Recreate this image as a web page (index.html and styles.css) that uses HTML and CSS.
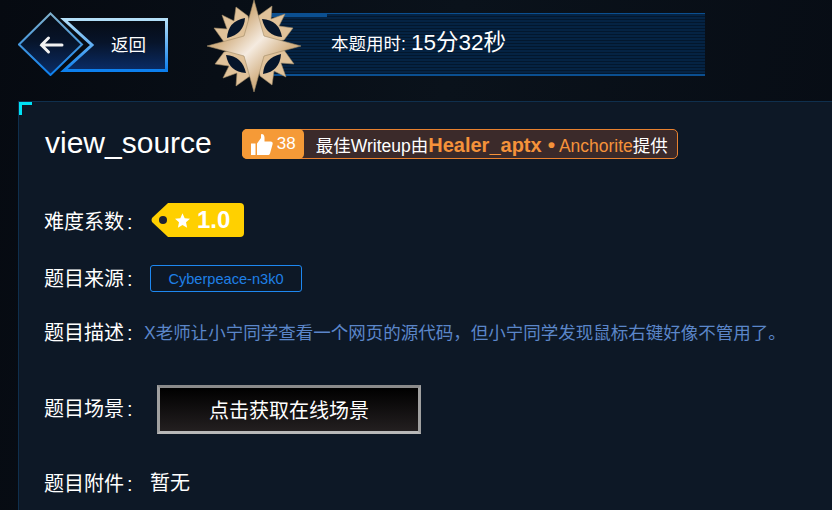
FILE: index.html
```html
<!DOCTYPE html>
<html lang="en">

<head>
    <meta charset="UTF-8">
    <meta name="viewport" content="width=device-width, initial-scale=1.0">
    <title>view_source</title>
    <link rel="stylesheet" href="styles.css">
</head>

<body>
    <header class="top-bar">
        <a class="back-btn">
            <svg class="back-shape" width="150" height="64" viewBox="0 0 150 64">
                <defs>
                    <linearGradient id="edge" x1="0" y1="0" x2="0" y2="1">
                        <stop offset="0" stop-color="#b4dff8" />
                        <stop offset="1" stop-color="#0c7fee" />
                    </linearGradient>
                    <linearGradient id="edge-dim" x1="0" y1="0" x2="0" y2="1">
                        <stop offset="0" stop-color="#7fb0cc" />
                        <stop offset="1" stop-color="#0c7fee" />
                    </linearGradient>
                    <linearGradient id="fill" x1="0" y1="0" x2="0" y2="1">
                        <stop offset="0" stop-color="#060b14" />
                        <stop offset="0.45" stop-color="#07142a" />
                        <stop offset="1" stop-color="#0a2c66" />
                    </linearGradient>
                </defs>
                <path d="M46 7.500H148.500V58.500H46L74 33Z" fill="url(#fill)" stroke="url(#edge)" stroke-width="3" />
                <path d="M32.500 1.500L64 32.500L32.500 63L1 32.500Z" fill="url(#fill)" stroke="url(#edge-dim)" stroke-width="2" />
                <path d="M44 33H23.500M30.500 26L23.500 33L30.500 40" fill="none" stroke="#f2f2f2" stroke-width="3" stroke-linecap="round" />
            </svg>
            <span class="back-text">返回</span>
        </a>
        <div class="timer">
            <svg class="star" width="94" height="92" viewBox="-47 -46 94 92">
                <defs>
                    <linearGradient id="gold" x1="0" y1="0" x2="1" y2="1">
                        <stop offset="0.3" stop-color="#d3b184" />
                        <stop offset="0.5" stop-color="#f5ebe0" />
                        <stop offset="0.7" stop-color="#d3b184" />
                    </linearGradient>
                    <g id="quarter">
                        <path d="M4 -30L18 -40L17 -27L31 -32L25 -20L39 -18L30 -6L0 0Z" fill="#e0c29a" stroke="#a08a66" stroke-width="0.6" />
                        <path d="M8 -27Q25 -26 28 -9Q12 -10 8 -27Z" fill="#06152a" />
                    </g>
                </defs>
                <use href="#quarter" />
                <use href="#quarter" transform="rotate(90)" />
                <use href="#quarter" transform="rotate(180)" />
                <use href="#quarter" transform="rotate(270)" />
                <path d="M0 -46L10 -10L47 0L10 10L0 46L-10 10L-47 0L-10 -10Z" fill="url(#gold)" stroke="#a08a66" stroke-width="0.6" />
            </svg>
            <div class="timer-bar">
                <span class="timer-label">本题用时:</span>
                <span class="timer-value">15分32秒</span>
            </div>
        </div>
    </header>

    <main class="panel">
        <div class="title-row">
            <h1 class="title">view_source</h1>
            <div class="writeup">
                <span class="likes">
                    <svg width="23" height="23" viewBox="0 0 23 23">
                        <path d="M1 10.500H5.500V22H1ZM7 10.500L11 5V1.500C11 .5 14.500 .5 14.500 4.500V8.500H20.500C22.500 8.500 23 10 22.500 11.500L20 20.500C19.500 21.500 19 22 17.500 22H7Z" fill="#fff" />
                    </svg>
                    38
                </span>
                <span class="writeup-text">最佳Writeup由<b class="author">Healer_aptx</b><span class="rank"><b class="dot">•</b> Anchorite</span>提供</span>
            </div>
        </div>

        <div class="row row-level">
            <span class="label">难度系数<span class="colon">:</span></span>
            <span class="level-tag">
                <svg width="15" height="15" viewBox="0 0 24 23">
                    <path d="M12 0L15.500 8L24 8.800L17.600 14.400L19.400 23L12 18.500L4.600 23L6.400 14.400L0 8.800L8.500 8Z" fill="#fff" />
                </svg>
                1.0
            </span>
        </div>

        <div class="row row-source">
            <span class="label">题目来源<span class="colon">:</span></span>
            <span class="source-tag">Cyberpeace-n3k0</span>
        </div>

        <div class="row row-desc">
            <span class="label">题目描述<span class="colon">:</span></span>
            <span class="desc">X老师让小宁同学查看一个网页的源代码，但小宁同学发现鼠标右键好像不管用了。</span>
        </div>

        <div class="row row-scene">
            <span class="label">题目场景<span class="colon">:</span></span>
            <button class="scene-btn">点击获取在线场景</button>
        </div>

        <div class="row row-files">
            <span class="label">题目附件<span class="colon">:</span></span>
            <span class="none">暂无</span>
        </div>
    </main>
</body>

</html>
```

FILE: styles.css
```css
/* Reset Styles */
* {
    margin: 0;
    padding: 0;
    box-sizing: border-box;
}

body {
    height: 510px;
    overflow: hidden;
    font-family: "Liberation Sans", "Noto Sans CJK SC", sans-serif;
    color: #fff;
    background: linear-gradient(100deg, #060a11, #0a121b 50%, #070c14);
}

/* Header */
.top-bar {
    display: flex;
    height: 101px;
    padding-left: 18px;
}

.back-btn {
    display: grid;
    width: 150px;
    height: 64px;
    margin-top: 12px;
}

.back-shape,
.back-text {
    grid-area: 1 / 1;
}

.back-text {
    align-self: center;
    margin: 0 0 2px 93px;
    font-size: 17.5px;
}

.timer {
    display: flex;
    margin-left: 39px;
}

.star {
    position: relative;
    z-index: 1;
}

.timer-bar {
    display: flex;
    align-items: baseline;
    gap: 5px;
    width: 435px;
    height: 63px;
    margin: 13px 0 0 -31px;
    padding: 10px 0 0 61px;
    border-top: 1px solid #0b4f90;
    border-bottom: 2px solid #0b4f90;
    background:
        linear-gradient(#0b4f90, #0b4f90) no-repeat 0 0 / 57px 3px,
        repeating-linear-gradient(180deg, #052343 0, #052343 2px, #03172d 2px, #03172d 3px);
}

.timer-label {
    font-size: 17.5px;
}

.timer-value {
    font-size: 22.5px;
}

/* Panel */
.panel {
    position: relative;
    height: 409px;
    margin-left: 18px;
    padding: 25px 0 0 25px;
    border-top: 1px solid #0f2f4d;
    border-left: 1px solid #0f2f4d;
    background: #0d1826;
}

.panel::before {
    content: "";
    position: absolute;
    top: 0;
    left: 0;
    width: 10px;
    height: 10px;
    border-top: 3px solid #00e1f5;
    border-left: 3px solid #00e1f5;
}

.title-row {
    display: flex;
    align-items: center;
    height: 32px;
}

.title {
    margin-left: 1px;
    font-size: 30px;
    font-weight: 400;
}

.writeup {
    display: flex;
    align-items: center;
    width: 436px;
    height: 30px;
    margin: 2px 0 0 30px;
    border: 1px solid #e8812f;
    border-radius: 5px;
    background: #3b2a2a;
}

.likes {
    display: flex;
    align-items: center;
    gap: 4px;
    width: 62px;
    height: 30px;
    margin: 0 0 0 -1px;
    padding-left: 8px;
    border-radius: 5px;
    background: #f59a37;
    font-size: 17px;
}

.writeup-text {
    margin-left: 12px;
    font-size: 17.5px;
    white-space: nowrap;
}

.author {
    font-size: 20px;
    color: #f5923a;
}

.rank {
    margin-left: 6px;
    color: #f5923a;
}

.dot {
    font-size: 21px;
}

/* Rows */
.row {
    display: flex;
    align-items: center;
}

.label {
    width: 100px;
    flex: none;
    margin-bottom: 2px;
    font-size: 20px;
    white-space: nowrap;
}

.colon {
    margin-left: 3px;
}

.row-level {
    height: 34px;
    margin-top: 44px;
}

.row-level .label {
    margin-bottom: 0;
}

.row-source {
    height: 27px;
    margin-top: 28px;
}

.row-desc {
    height: 26px;
    margin-top: 26px;
}

.row-desc .label {
    margin-bottom: 0;
}

.row-scene {
    height: 49px;
    margin-top: 41px;
}

.row-scene .label {
    margin-bottom: 4px;
}

.row-files {
    height: 26px;
    margin-top: 37px;
}

.row-files .label {
    margin-bottom: 4px;
}

.level-tag {
    display: flex;
    align-items: center;
    gap: 7px;
    width: 93px;
    height: 34px;
    margin-left: 7px;
    padding-left: 24px;
    background: #ffd000;
    clip-path: path("M17 0H89Q93 0 93 4V30Q93 34 89 34H17L1 19Q0 17 1 15Z");
    font-size: 24px;
    font-weight: 700;
    position: relative;
}

.level-tag::before {
    content: "";
    position: absolute;
    top: 13px;
    left: 8px;
    width: 8px;
    height: 8px;
    border-radius: 50%;
    background: #1c2233;
}

.source-tag {
    width: 152px;
    height: 27px;
    margin-left: 6px;
    border: 1px solid #1e88f0;
    border-radius: 3px;
    color: #1f80e6;
    font-size: 14.6px;
    line-height: 27px;
    text-align: center;
}

.desc {
    color: #5b86c9;
    font-size: 17.5px;
    white-space: nowrap;
}

.scene-btn {
    width: 264px;
    height: 49px;
    margin-left: 13px;
    border: 3px solid;
    border-color: #8a8a8a #a0a0a0 #b8b8b8;
    background: linear-gradient(180deg, #000, #231f20);
    color: #fff;
    font-family: inherit;
    font-size: 20px;
}

.none {
    margin: -5px 0 0 6px;
    font-size: 20px;
}
```
